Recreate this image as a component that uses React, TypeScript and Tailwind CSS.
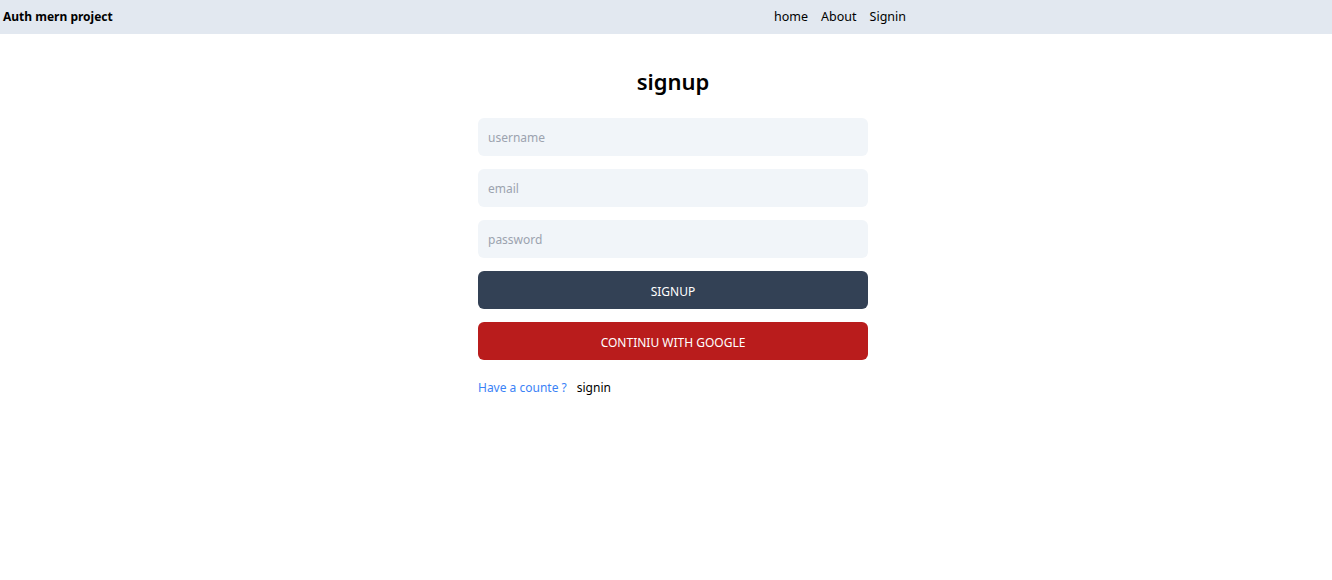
export default function App() {
  return (
    <div className="min-h-screen bg-white text-black font-['Noto_Sans',sans-serif]">
      <header className="bg-[#e2e8f0] h-[34px]">
        <div className="w-[906px] h-full flex items-center justify-between pl-[3px]">
          <h1 className="font-bold text-[12px]">Auth mern project</h1>
          <ul className="flex gap-[13px] text-[12.5px] pt-[1px]">
            <li>home</li>
            <li>About</li>
            <li>Signin</li>
          </ul>
        </div>
      </header>

      <div className="w-[390px] ml-[478px]">
        <h1 className="text-[22px] font-semibold text-center mt-[32px] mb-[22px] leading-[30px]">signup</h1>
        <form className="flex flex-col gap-[13px]">
          <input
            type="text"
            placeholder="username"
            className="bg-[#f1f5f9] h-[38px] px-[10px] rounded-[6px] text-[12px] placeholder-[#9ca3af] outline-none"
          />
          <input
            type="email"
            placeholder="email"
            className="bg-[#f1f5f9] h-[38px] px-[10px] rounded-[6px] text-[12px] placeholder-[#9ca3af] outline-none"
          />
          <input
            type="password"
            placeholder="password"
            className="bg-[#f1f5f9] h-[38px] px-[10px] rounded-[6px] text-[12px] placeholder-[#9ca3af] outline-none"
          />
          <button
            type="button"
            className="bg-[#334155] text-white h-[38px] pt-[3px] rounded-[6px] uppercase text-[12px]"
          >
            signup
          </button>
          <button
            type="button"
            className="bg-[#b91c1c] text-white h-[38px] pt-[3px] rounded-[6px] uppercase text-[12px]"
          >
            continiu with google
          </button>
        </form>
        <div className="flex gap-[10px] mt-[19px] text-[12px]">
          <p className="text-[#3b82f6]">Have a counte ?</p>
          <span>signin</span>
        </div>
      </div>
    </div>
  )
}
